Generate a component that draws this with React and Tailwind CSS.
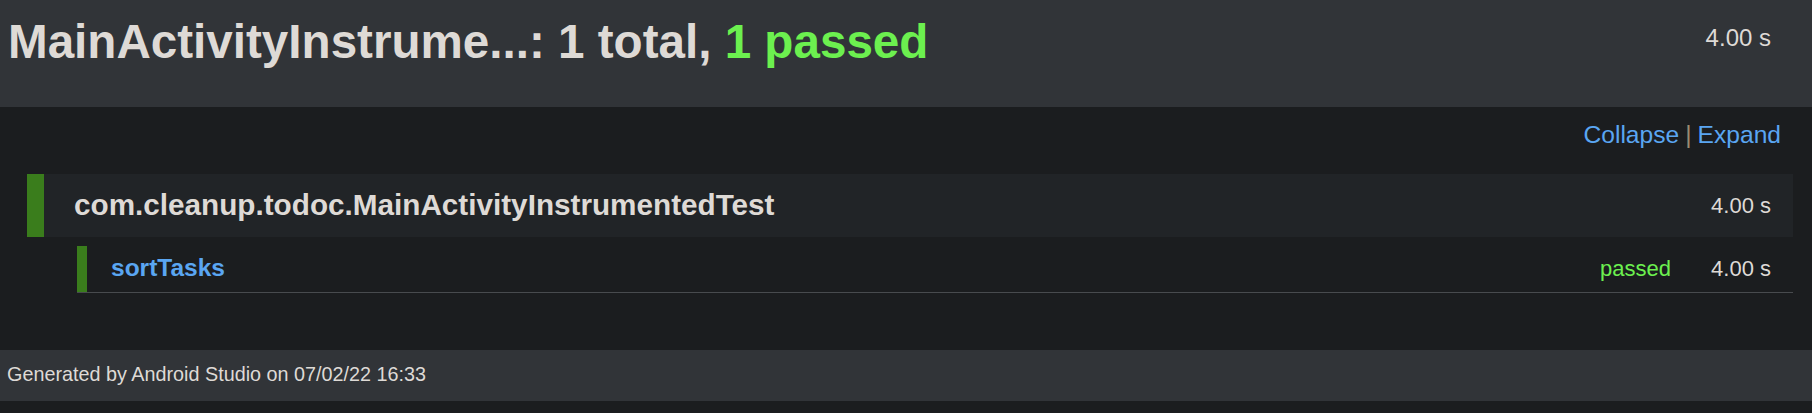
import React from "react";

const tests = [{ name: "sortTasks", status: "passed", time: "4.00 s" }];

export default function App() {
  return (
    <div className="min-h-[413px] w-full bg-[#1b1d1f] font-['Liberation_Sans',Arial,sans-serif] text-[#dedad6]">
      {/* Summary header */}
      <div className="flex h-[107px] justify-between bg-[#313438] pl-2 pr-[41px]">
        <h1 className="pt-[18px] text-[47.6px] font-bold leading-none">
          MainActivityInstrume...: 1 total, <span className="text-[#6cf04f]">1 passed</span>
        </h1>
        <span className="pt-[26px] text-[24px] leading-none">4.00 s</span>
      </div>

      {/* Results */}
      <div className="pb-[57px] pt-4">
        <div className="flex justify-end pr-[31px] text-[24.6px] leading-none">
          <a className="text-[#5aa6f2]">Collapse</a>
          <span className="px-[6px] text-[#9a8c72]">|</span>
          <a className="text-[#5aa6f2]">Expand</a>
        </div>

        <div className="ml-[27px] mr-[19px] mt-[26px] flex h-[63px] items-center bg-[#212427]">
          <div className="h-full w-[17px] bg-[#3a7d1c]" />
          <span className="ml-[30px] flex-1 text-[29.7px] font-bold">com.cleanup.todoc.MainActivityInstrumentedTest</span>
          <span className="pr-[22px] text-[22px]">4.00 s</span>
        </div>

        {tests.map((t) => (
          <div key={t.name} className="ml-[77px] mr-[19px] mt-[9px] flex h-[47px] items-center border-b border-[#484b4e]">
            <div className="h-full w-[10px] bg-[#3a7d1c]" />
            <span className="ml-[24px] flex-1 text-[24.5px] font-bold text-[#5aa6f2]">{t.name}</span>
            <span className="text-[22px] text-[#6cf04f]">{t.status}</span>
            <span className="ml-10 pr-[22px] text-[22px]">{t.time}</span>
          </div>
        ))}
      </div>

      {/* Footer */}
      <div className="flex h-[51px] items-center bg-[#313438] px-[7px] text-[19.8px]">
        Generated by Android Studio on 07/02/22 16:33
      </div>
    </div>
  );
}
